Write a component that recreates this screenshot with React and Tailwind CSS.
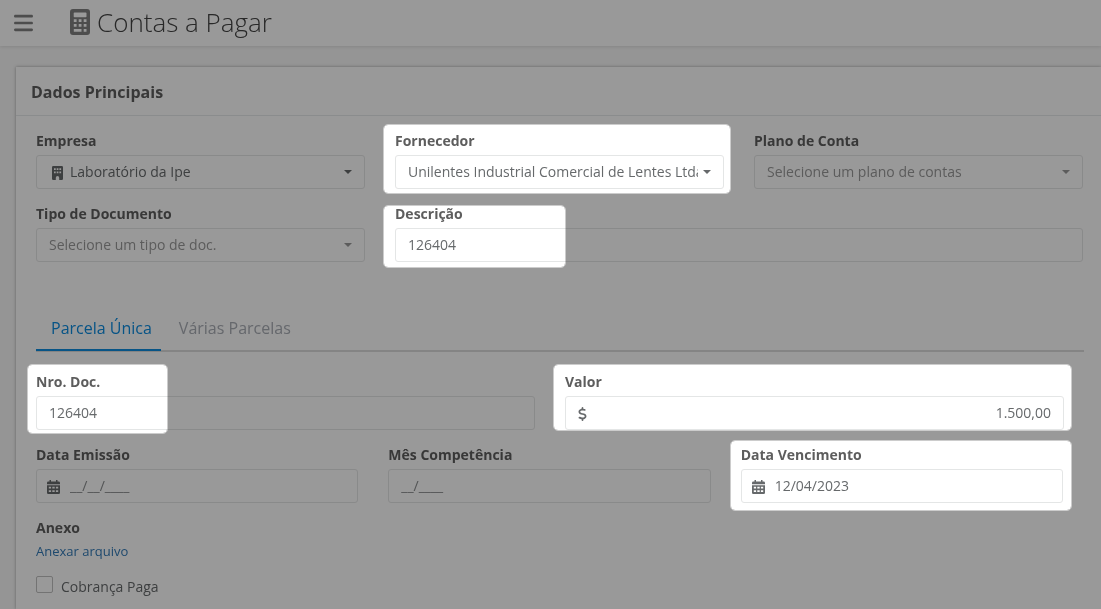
import React from 'react';
import { FaBars, FaDollarSign } from 'react-icons/fa6';

const controlClass =
  'block w-full h-[34px] rounded-[3px] border border-[#e5e6e7] bg-white text-sm placeholder:text-[#8b8d8f] outline-none';

function CalculatorIcon() {
  return (
    <svg aria-hidden="true" viewBox="0 0 20 26" className="w-5 h-[26px] text-[#808080]" fill="currentColor">
      <path
        fillRule="evenodd"
        d="M3 0h14a3 3 0 0 1 3 3v20a3 3 0 0 1-3 3H3a3 3 0 0 1-3-3V3a3 3 0 0 1 3-3zM4.5 3.5a.8.8 0 0 0-.8.8v3.2a.8.8 0 0 0 .8.8h11.2a.8.8 0 0 0 .8-.8V4.300a.8.8 0 0 0-.8-.8zM3.800 10.200v2.800h2.800v-2.800zM8.700 10.200v2.800h2.800v-2.800zM13.700 10.200v2.800h2.800v-2.800zM3.800 15v2.800h2.800V15zM8.700 15v2.800h2.800V15zM13.700 15v2.800h2.800V15zM3.800 20v2.800h7.700V20zM13.700 20v2.800h2.800V20z"
      />
    </svg>
  );
}

function BuildingIcon() {
  return (
    <svg aria-hidden="true" viewBox="0 0 11 14" className="w-[11px] h-[14px]" fill="currentColor">
      <path
        fillRule="evenodd"
        d="M1.200 0h8.600A1.200 1.200 0 0 1 11 1.200v11.600A1.200 1.200 0 0 1 9.800 14H7.200v-2.300a1.700 1.700 0 0 0-3.400 0V14H1.200A1.200 1.200 0 0 1 0 12.800V1.200A1.200 1.200 0 0 1 1.200 0zM2 2.200v1.700h1.700V2.200zM4.700 2.200v1.700h1.700V2.200zM7.400 2.200v1.700h1.700V2.200zM2 5.500v1.700h1.700V5.500zM4.700 5.500v1.700h1.700V5.500zM7.400 5.500v1.700h1.700V5.500z"
      />
    </svg>
  );
}

function CalendarIcon() {
  return (
    <svg aria-hidden="true" viewBox="0 0 13 14" className="w-[13px] h-[14px]" fill="currentColor">
      <path d="M2.500 0h1.500v1.600h5V0h1.500v1.600h1.200A1.300 1.300 0 0 1 13 2.900V4.300H0V2.900a1.300 1.300 0 0 1 1.300-1.300h1.200z" />
      <path
        fillRule="evenodd"
        d="M0 5.200h13v7.500a1.300 1.300 0 0 1-1.300 1.300H1.300A1.300 1.300 0 0 1 0 12.700zM1.800 6.800v1.800h2.300V6.800zM5.300 6.800v1.800h2.400V6.800zM8.900 6.800v1.800h2.300V6.800zM1.800 10.200v1.800h2.300v-1.800zM5.300 10.200v1.800h2.400v-1.800zM8.900 10.200v1.800h2.300v-1.800z"
      />
    </svg>
  );
}

// Sits above the page shade and cancels it, so the area under it shows at full brightness
function Spotlight({ className }) {
  return (
    <span
      aria-hidden="true"
      className={`absolute z-20 pointer-events-none rounded-[5px] border border-[#404040] bg-[#666666] bg-clip-padding mix-blend-color-dodge ${className}`}
    />
  );
}

function Field({ id, label, spotlight, className = '', children }) {
  return (
    <div className={`relative min-w-0 ${className}`}>
      <label htmlFor={id} className="block mb-1 text-sm leading-5 font-bold text-[#5e5e5e]">
        {label}
      </label>
      <div className="relative">{children}</div>
      {spotlight && <Spotlight className={spotlight} />}
    </div>
  );
}

function SelectBox({ id, value, icon, muted }) {
  return (
    <>
      {icon && <span className="absolute left-4 top-[11px]">{icon}</span>}
      <select
        id={id}
        className={`${controlClass} appearance-none pr-[25px] ${icon ? 'pl-[33px]' : 'pl-3'} ${muted ? 'text-[#999999]' : 'text-[#676a6c]'}`}
      >
        <option>{value}</option>
      </select>
      <span
        className={`absolute right-[13px] top-[15px] border-x-4 border-t-4 border-x-transparent pointer-events-none ${muted ? 'border-t-[#999999]' : 'border-t-[#676a6c]'}`}
      />
    </>
  );
}

function TextBox({ id, value, placeholder, icon, alignRight }) {
  return (
    <>
      {icon && <span className="absolute left-[11px] top-[11px]">{icon}</span>}
      <input
        id={id}
        type="text"
        defaultValue={value}
        placeholder={placeholder}
        className={`${controlClass} pb-0.5 pr-3 text-[#676a6c] ${icon ? 'pl-[33px]' : 'pl-3'} ${alignRight ? 'text-right' : ''}`}
      />
    </>
  );
}

function Header() {
  return (
    <header className="flex items-center h-[46px] pl-[14px] bg-white shadow-[0_1px_3px_rgba(0,0,0,0.1)]">
      <button type="button" aria-label="Menu" className="mr-[37px] pb-px text-[#808080]">
        <FaBars className="w-[19px] h-[22px]" />
      </button>
      <h1 className="flex items-center gap-[7px] pb-[3px] text-[26px] leading-8 font-light text-[#444444]">
        <CalculatorIcon />
        Contas a Pagar
      </h1>
    </header>
  );
}

function Tabs() {
  return (
    <div role="tablist" className="flex mt-11 mb-5 border-b-2 border-[#dddddd] text-base leading-6">
      <button
        type="button"
        role="tab"
        aria-selected="true"
        className="-mb-px h-[45px] pl-[15px] pr-[9px] border-b-2 border-[#0d8ce0] text-[#0d8ce0]"
      >
        Parcela Única
      </button>
      <button type="button" role="tab" aria-selected="false" className="h-11 px-[18px] text-[#a9adb5]">
        Várias Parcelas
      </button>
    </div>
  );
}

function App() {
  return (
    <div className="relative isolate min-h-screen overflow-hidden bg-[#f8f8f8] font-['Open_Sans',sans-serif] text-[#676a6c]">
      <Header />

      <main className="mt-[21px] ml-4 pb-3 bg-white shadow-[0_0_3px_rgba(0,0,0,0.35)]">
        <h2 className="h-[49px] px-[15px] border-b border-[#e7eaec] text-base leading-[50px] font-bold text-[#5e5e5e]">
          Dados Principais
        </h2>

        <form className="pt-[15px] pl-5 pr-[17px]">
          <div className="grid grid-cols-3 gap-x-[30px] gap-y-[15px] pr-px">
            <Field id="empresa" label="Empresa">
              <SelectBox id="empresa" value="Laboratório da Ipe" icon={<BuildingIcon />} />
            </Field>
            <Field id="fornecedor" label="Fornecedor" spotlight="-left-3 -right-[7px] -top-[7px] -bottom-[5px]">
              <SelectBox id="fornecedor" value="Unilentes Industrial Comercial de Lentes Ltda" />
            </Field>
            <Field id="plano" label="Plano de Conta">
              <SelectBox id="plano" value="Selecione um plano de contas" muted />
            </Field>
            <Field id="tipo" label="Tipo de Documento">
              <SelectBox id="tipo" value="Selecione um tipo de doc." muted />
            </Field>
            <Field
              id="descricao"
              label="Descrição"
              className="col-span-2"
              spotlight="-left-3 w-[183px] top-px -bottom-[6px]"
            >
              <TextBox id="descricao" value="126404" />
            </Field>
          </div>

          <Tabs />

          <div className="pr-5">
            <div className="grid grid-cols-2 gap-x-[30px] mb-[15px]">
              <Field id="numero" label="Nro. Doc." spotlight="-left-[9px] w-[141px] -top-2 -bottom-1">
                <TextBox id="numero" value="126404" />
              </Field>
              <Field id="valor" label="Valor" spotlight="-left-3 -right-2 -top-2 -bottom-px">
                <TextBox
                  id="valor"
                  value="1.500,00"
                  icon={<FaDollarSign className="w-[13px] h-[14px]" />}
                  alignRight
                />
              </Field>
            </div>

            <div className="grid grid-cols-3 gap-x-[30px] mb-[15px] pr-px">
              <Field id="emissao" label="Data Emissão">
                <TextBox id="emissao" placeholder="__/__/____" icon={<CalendarIcon />} />
              </Field>
              <Field id="competencia" label="Mês Competência">
                <TextBox id="competencia" placeholder="__/____" />
              </Field>
              <Field id="vencimento" label="Data Vencimento" spotlight="-left-[11px] -right-[9px] -top-[5px] -bottom-2">
                <TextBox id="vencimento" value="12/04/2023" icon={<CalendarIcon />} />
              </Field>
            </div>
          </div>

          <p className="text-sm leading-5 font-bold text-[#5e5e5e]">Anexo</p>
          <a href="#anexo" className="inline-block mt-[3px] text-[13px] leading-5 text-[#337ab7]">
            Anexar arquivo
          </a>
          <div className="flex items-start gap-2 mt-[14px]">
            <input
              id="paga"
              type="checkbox"
              className="appearance-none w-[17px] h-[17px] rounded-[2px] border border-[#c0c0c0] bg-white"
            />
            <label htmlFor="paga" className="pt-px text-sm leading-5">
              Cobrança Paga
            </label>
          </div>
        </form>
      </main>

      <div className="absolute inset-0 z-10 bg-black/40 pointer-events-none" />
    </div>
  );
}

export default App;
